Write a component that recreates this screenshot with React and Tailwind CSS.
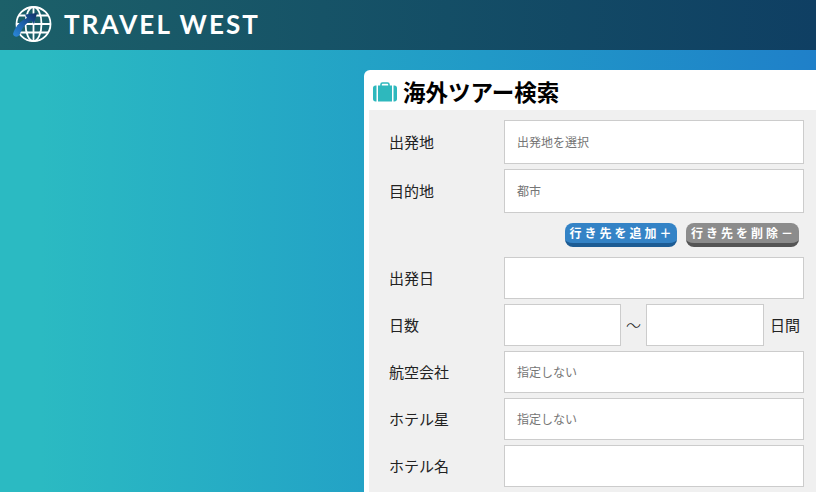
const cjk = "font-['Noto_Sans_CJK_JP','Noto_Sans',sans-serif]";

function Globe() {
  return (
    <svg width="40" height="38" viewBox="0 0 40 38" fill="none">
      <defs>
        <linearGradient id="arrow-fill" x1="2" y1="31" x2="24" y2="9" gradientUnits="userSpaceOnUse">
          <stop offset="0" stopColor="#2a86d6" />
          <stop offset="0.5" stopColor="#1d5fa8" />
          <stop offset="1" stopColor="#12336a" />
        </linearGradient>
      </defs>
      <g stroke="#fff" strokeWidth="1.8">
        <circle cx="21.5" cy="19" r="17" />
        <ellipse cx="21.5" cy="19" rx="8" ry="17" />
        <path d="M21.5 2v34M4.500 19h34M7 10.500h29M7 27.500h29" />
      </g>
      <path d="M1 29C3 22 8 16 15 13l-2-3.500L25 8l-3 11-2.500-3.500C14 18 10 23 8 29c-1.500 3.500-6 3.500-7 0z" fill="url(#arrow-fill)" />
    </svg>
  );
}

function Suitcase() {
  return (
    <svg width="24" height="20" viewBox="0 0 24 20" fill="none">
      <path d="M8 4V2.500C8 1.500 8.700 1 9.500 1h5c.8 0 1.500.5 1.500 1.500V4" stroke="#2eb8bd" strokeWidth="1.600" />
      <rect x="5" y="3.500" width="14" height="16" fill="#2eb8bd" />
      <path d="M3.500 3.500v16H2.500C1 19.500 0 18.500 0 17V6c0-1.500 1-2.500 2.500-2.500zM20.500 3.500v16h1c1.500 0 2.500-1 2.500-2.500V6c0-1.500-1-2.500-2.500-2.500z" fill="#2eb8bd" />
    </svg>
  );
}

function Field({ label, placeholder, tall }) {
  return (
    <div className="flex items-center">
      <div className="w-[135px] pl-5 text-[15px] text-[#222]">{label}</div>
      <div
        className={`flex w-[300px] items-center border border-[#ccc] bg-white pl-3 text-xs text-[#757575] ${tall ? "h-[44px]" : "h-[42px]"}`}
      >
        {placeholder}
      </div>
    </div>
  );
}

function PillButton({ children, className }) {
  return (
    <div
      className={`flex h-6 items-start justify-center rounded-lg border-b-4 pt-[1px] pl-[2px] text-xs leading-[17px] font-bold tracking-[3px] text-white ${className}`}
    >
      {children}
    </div>
  );
}

export default function App() {
  return (
    <div className={`flex h-[492px] w-[816px] flex-col overflow-hidden ${cjk}`}>
      <header className="flex h-[50px] shrink-0 items-center gap-3 bg-gradient-to-r from-[#1c6069] to-[#0f3f63] pb-[2px] pl-3">
        <Globe />
        <span className="font-['Lato',sans-serif] text-[26px] font-bold tracking-[2.1px] text-white">TRAVEL WEST</span>
      </header>

      <main className="flex flex-1 justify-end bg-gradient-to-r from-[#2bbac2] from-5% to-[#1f80c9] pt-5">
        <section className="h-[500px] w-[452px] rounded-tl-md bg-white pl-[5px]">
          <h1 className="flex h-10 items-center gap-[6px] pt-[4px] pl-[4px] text-[22.500px] font-bold text-black">
            <Suitcase />
            海外ツアー検索
          </h1>

          <div className="flex h-[400px] flex-col gap-[5px] bg-[#f0f0f0] pt-[10px]">
            <Field label="出発地" placeholder="出発地を選択" tall />
            <Field label="目的地" placeholder="都市" tall />

            <div className="flex h-[34px] justify-end gap-[9px] pt-[5px] pr-[17px]">
              <PillButton className="w-[112px] border-[#1d5c94] bg-[#3483c6]">行き先を追加＋</PillButton>
              <PillButton className="w-[113px] border-[#555] bg-[#8c8c8c]">行き先を削除－</PillButton>
            </div>

            <Field label="出発日" />

            <div className="flex items-center">
              <div className="w-[135px] pl-5 text-[15px] text-[#222]">日数</div>
              <div className="h-[42px] w-[117px] border border-[#ccc] bg-white" />
              <div className="w-[25px] text-center text-[15px] font-light text-[#222]">〜</div>
              <div className="h-[42px] w-[118px] border border-[#ccc] bg-white" />
              <div className="pl-[6px] text-[15px] text-[#222]">日間</div>
            </div>

            <Field label="航空会社" placeholder="指定しない" />
            <Field label="ホテル星" placeholder="指定しない" />
            <Field label="ホテル名" />
          </div>
        </section>
      </main>
    </div>
  );
}
